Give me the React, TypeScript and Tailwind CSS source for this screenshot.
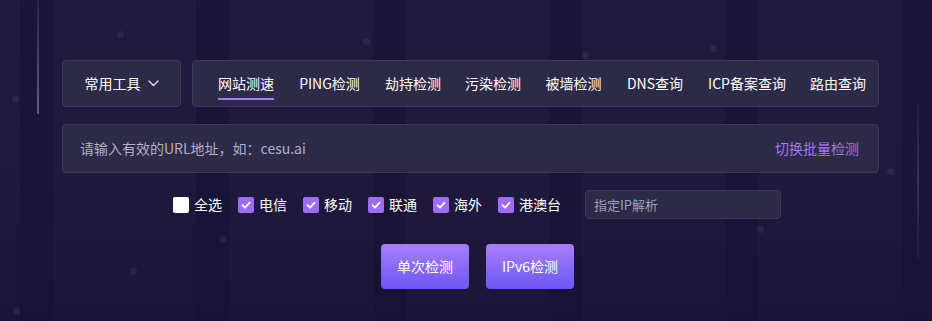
import React from "react";

const tabs: { t: string; w: string }[] = [
  { t: "网站测速", w: "w-[56px]" },
  { t: "PING检测", w: "w-[63px]" },
  { t: "劫持检测", w: "w-[56px]" },
  { t: "污染检测", w: "w-[56px]" },
  { t: "被墙检测", w: "w-[57px]" },
  { t: "DNS查询", w: "w-[58px]" },
  { t: "ICP备案查询", w: "w-[78px]" },
  { t: "路由查询", w: "w-[56px]" },
];
const checks: { label: string; checked: boolean }[] = [
  { label: "全选", checked: false },
  { label: "电信", checked: true },
  { label: "移动", checked: true },
  { label: "联通", checked: true },
  { label: "海外", checked: true },
  { label: "港澳台", checked: true },
];

const dots: [number, number][] = [
  [120, 34],
  [366, 41],
  [585, 55],
  [713, 48],
  [15, 99],
  [223, 239],
  [133, 271],
  [16, 311],
  [890, 171],
  [760, 229],
];

function Check({ checked }: { checked: boolean }) {
  if (!checked) {
    return <span className="block w-[16px] h-[16px] rounded-[2px] bg-white" />;
  }
  return (
    <span className="flex items-center justify-center w-[16px] h-[16px] rounded-[2px] bg-[#9c6df6]">
      <svg width="12" height="12" viewBox="0 0 12 12" fill="none">
        <polyline points="2.5,6.2 5,8.6 9.6,3.6" stroke="#ffffff" strokeWidth="1.8" strokeLinecap="round" strokeLinejoin="round" />
      </svg>
    </span>
  );
}

export default function App() {
  return (
    <div className="relative w-full h-[321px] overflow-hidden bg-[linear-gradient(180deg,#201b3e_0%,#1f1a3d_55%,#1b1538_100%)] font-['Noto_Sans_CJK_SC',sans-serif]">
      <div className="absolute inset-0 bg-[repeating-linear-gradient(90deg,transparent_0px,transparent_20px,rgba(20,14,50,0.45)_20px,rgba(20,14,50,0.45)_53px,transparent_53px,transparent_176.3px)]" />
      <div className="absolute left-[37px] top-0 w-[2px] h-[114px] bg-[linear-gradient(180deg,rgba(120,115,170,0.15),rgba(125,120,180,0.7))]" />
      <div className="absolute left-[917px] top-[100px] w-[2px] h-[160px] bg-[linear-gradient(180deg,rgba(120,115,170,0.05),rgba(110,105,165,0.35),rgba(120,115,170,0.05))]" />
      {dots.map(([x, y], i) => (
        <span
          key={i}
          className="absolute w-[7px] h-[7px] rounded-full bg-[rgba(255,255,255,0.06)]"
          style={{ left: x - 3.5, top: y - 3.5 }}
        />
      ))}

      <div className="relative ml-[62px] w-[817px] pt-[60px]">
        <div className="flex gap-[11px] h-[47px]">
          <div className="w-[119px] h-full flex items-center justify-center gap-[7px] rounded-[4px] border border-[#3c3958] bg-[#2d2a47] text-white text-[14px]">
            <span>常用工具</span>
            <svg width="11" height="7" viewBox="0 0 11 7" fill="none">
              <polyline points="1,1 5.5,5.5 10,1" stroke="#e8e6f2" strokeWidth="1.3" strokeLinecap="round" strokeLinejoin="round" />
            </svg>
          </div>
          <div className="flex-1 h-full flex items-center gap-[24px] pl-[25px] rounded-[4px] border border-[#3c3958] bg-[#2d2a47]">
            {tabs.map((tab, i) => (
              <div key={tab.t} className={`relative h-full flex items-center justify-center whitespace-nowrap text-[14px] text-white ${tab.w}`}>
                {tab.t}
                {i === 0 && <span className="absolute left-0 right-0 bottom-[6px] h-[2px] bg-[#a67cf6]" />}
              </div>
            ))}
          </div>
        </div>

        <div className="mt-[17px] h-[49px] flex items-center justify-between pl-[17px] pr-[19px] rounded-[4px] border border-[#3c3958] bg-[#2d2a47] text-[14px]">
          <span className="text-[#b3b0c6]">请输入有效的URL地址，如：cesu.ai</span>
          <span className="text-[#a374f6]">切换批量检测</span>
        </div>

        <div className="mt-[17px] ml-[111px] flex items-center h-[29px]">
          {checks.map((c) => (
            <div key={c.label} className="flex items-center gap-[5px] mr-[16px] text-[14px] text-white">
              <Check checked={c.checked} />
              <span>{c.label}</span>
            </div>
          ))}
          <div className="ml-[8px] w-[196px] h-[29px] flex items-center pl-[8px] rounded-[4px] border border-[#3c3958] bg-[#2d2a47] text-[13px] text-[#a19eb6]">
            指定IP解析
          </div>
        </div>

        <div className="mt-[25px] ml-[319px] flex gap-[17px]">
          <button className="w-[88px] h-[45px] rounded-[4px] bg-[linear-gradient(180deg,#a87ef9,#6c56f6)] text-white text-[14px]">
            单次检测
          </button>
          <button className="w-[88px] h-[45px] rounded-[4px] bg-[linear-gradient(180deg,#a87ef9,#6c56f6)] text-white text-[14px]">
            IPv6检测
          </button>
        </div>
      </div>
    </div>
  );
}
